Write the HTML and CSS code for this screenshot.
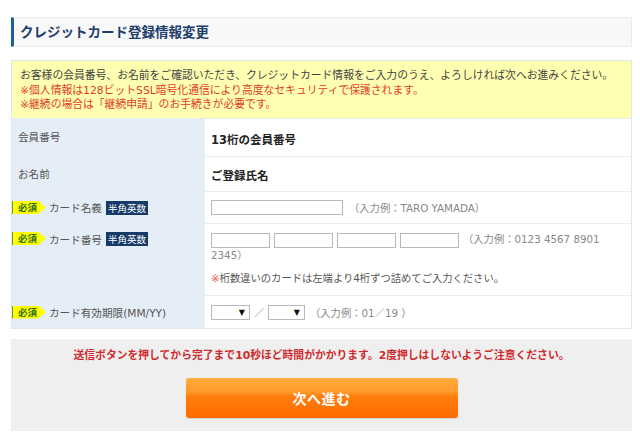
FILE: index.html
```html
<!DOCTYPE html>
<html lang="ja">
<head>
<meta charset="utf-8">
<title>クレジットカード登録情報変更</title>
<link rel="stylesheet" href="styles.css">
</head>
<body>
<div class="page">
  <h1 class="title">クレジットカード登録情報変更</h1>

  <div class="notice">
    <p class="notice-line">お客様の会員番号、お名前をご確認いただき、クレジットカード情報をご入力のうえ、よろしければ次へお進みください。</p>
    <p class="notice-line red">※個人情報は128ビットSSL暗号化通信により高度なセキュリティで保護されます。</p>
    <p class="notice-line red">※継続の場合は「継続申請」のお手続きが必要です。</p>
  </div>

  <div class="form">
    <div class="row r1">
      <div class="label">会員番号</div>
      <div class="value"><span class="strong">13桁の会員番号</span></div>
    </div>
    <div class="row r2">
      <div class="label">お名前</div>
      <div class="value"><span class="strong">ご登録氏名</span></div>
    </div>
    <div class="row r3">
      <div class="label"><span class="req">必須</span><span class="ltext">カード名義</span><span class="hankaku">半角英数</span></div>
      <div class="value"><input class="inp name" type="text"><span class="hint">（入力例：TARO YAMADA）</span></div>
    </div>
    <div class="row r4">
      <div class="label top"><span class="req">必須</span><span class="ltext">カード番号</span><span class="hankaku">半角英数</span></div>
      <div class="value top">
        <div class="cardline"><input class="inp num" type="text"><input class="inp num" type="text"><input class="inp num" type="text"><input class="inp num last" type="text"><span class="hint">（入力例：0123 4567 8901 2345）</span></div>
        <p class="note"><span class="mark">※</span>桁数違いのカードは左端より4桁ずつ詰めてご入力ください。</p>
      </div>
    </div>
    <div class="row r5">
      <div class="label"><span class="req">必須</span><span class="ltext">カード有効期限(MM/YY)</span></div>
      <div class="value"><span class="sel s1"><select><option></option></select></span><span class="slash">／</span><span class="sel s2"><select><option></option></select></span><span class="hint">（入力例：01／19 ）</span></div>
    </div>
  </div>

  <div class="submit">
    <p class="warn">送信ボタンを押してから完了まで10秒ほど時間がかかります。2度押しはしないようご注意ください。</p>
    <button class="btn" type="button">次へ進む</button>
  </div>
</div>
</body>
</html>
```

FILE: styles.css
```css
* { box-sizing: border-box; }
html, body { margin: 0; padding: 0; background: #fff; }
body {
  font-family: "DejaVu Sans", "Noto Sans CJK JP", sans-serif;
  color: #444;
  font-size: 10.8px;
}
.page {
  width: 621px;
  margin-left: 11px;
  padding-top: 17px;
}
.title {
  margin: 0;
  height: 30px;
  background: #f8f8f8;
  border: 1px solid #e9e9e9;
  border-left: 3px solid #1f5e98;
  font-size: 13.5px;
  font-weight: 700;
  color: #1d3e6b;
  line-height: 28px;
  padding-left: 6px;
}
.notice {
  margin-top: 13px;
  background: #ffffb2;
  border: 1px solid #dfe6ea;
  border-bottom: none;
  padding: 8px 8px 4px 8px;
  height: 58px;
}
.notice-line {
  margin: 0;
  line-height: 14.6px;
  color: #444;
  white-space: nowrap;
}
.notice-line.red { color: #e23b2a; }

.form {
  border: 1px solid #dde7f0;
  border-top: 1px solid #e3ebf0;
}
.row {
  display: grid;
  grid-template-columns: 193px 1fr;
  border-top: 1px solid #e8eef3;
}
.row:first-child { border-top: none; }
.r1 { height: 37px; }
.r2 { height: 35px; }
.r3 { height: 32px; }
.r4 { height: 72px; }
.r5 { height: 33px; }
.label {
  background: #e5eef7;
  display: flex;
  align-items: center;
  padding-left: 6px;
  color: #555;
  font-size: 10.6px;
  white-space: nowrap;
}
.r1 .label, .r2 .label { padding-bottom: 2px; }
.label.top { align-items: flex-start; padding-top: 8px; }
.value {
  display: flex;
  align-items: center;
  padding-left: 6px;
  background: #fff;
}
.value.top { display: block; padding-top: 8px; }
.strong {
  font-weight: 700;
  font-size: 11.5px;
  color: #222;
  position: relative;
  top: 1px;
}
.req {
  display: inline-block;
  width: 34px;
  height: 13px;
  margin-left: -6px;
  background: #ffff00;
  color: #2f6f1a;
  font-family: "Noto Sans CJK JP", sans-serif;
  font-size: 9.5px;
  font-weight: 700;
  line-height: 13px;
  padding-left: 5px;
  clip-path: polygon(0 0, 78% 0, 100% 50%, 78% 100%, 0 100%);
  border-left: 1px solid #6a9a40;
}
.ltext { margin-left: 3px; }
.hankaku {
  display: inline-block;
  background: #173a69;
  color: #fff;
  font-family: "Noto Sans CJK JP", sans-serif;
  font-size: 9.5px;
  line-height: 14px;
  height: 14px;
  padding: 0 2px;
  margin-left: 4px;
}
.inp {
  height: 15px;
  border: 1px solid #b8b8b8;
  background: #fff;
  margin: 0;
  padding: 0;
  vertical-align: middle;
}
.inp.name { width: 132px; }
.inp.num { width: 59px; margin-right: 4px; }
.inp.num.last { margin-right: 2px; }
.hint {
  color: #888;
  font-size: 10.3px;
  margin-left: 6px;
}
.cardline {
  line-height: 15px;
  font-size: 10.3px;
}
.cardline .hint { margin-left: 2px; }
.note {
  margin: 8px 0 0 0;
  color: #555;
  font-size: 10.3px;
  line-height: 15px;
}
.mark { color: #e8564a; }
.sel {
  position: relative;
  display: inline-block;
  height: 15px;
}
.sel select {
  -webkit-appearance: none;
  appearance: none;
  height: 15px;
  border: 1px solid #b8b8b8;
  background: #fff;
  margin: 0;
  padding: 0;
  display: block;
}
.s1 select { width: 39px; }
.s2 select { width: 37px; }
.sel::after {
  content: "▼";
  position: absolute;
  right: 5px;
  top: 2px;
  font-size: 8px;
  line-height: 11px;
  color: #111;
  pointer-events: none;
}
.slash {
  color: #777;
  font-size: 10px;
  width: 18px;
  text-align: center;
}
.r5 .hint { margin-left: 5px; }

.submit {
  margin-top: 10px;
  background: #efefef;
  height: 92px;
  padding-top: 9px;
  text-align: center;
}
.warn {
  margin: 0;
  color: #cf2b2e;
  font-weight: 700;
  font-size: 10.8px;
  line-height: 16px;
}
.btn {
  display: block;
  margin: 14px auto 0 auto;
  width: 272px;
  height: 40px;
  border: none;
  border-radius: 3px;
  background: linear-gradient(to bottom, #ffad3c 0%, #ff9a2a 35%, #ff7e0e 45%, #ff6c00 100%);
  box-shadow: 0 1px 1px rgba(0,0,0,0.12);
  color: #fff;
  font-family: "Noto Sans CJK JP", sans-serif;
  font-size: 14px;
  font-weight: 700;
  padding: 0;
  letter-spacing: 0.5px;
}
```
